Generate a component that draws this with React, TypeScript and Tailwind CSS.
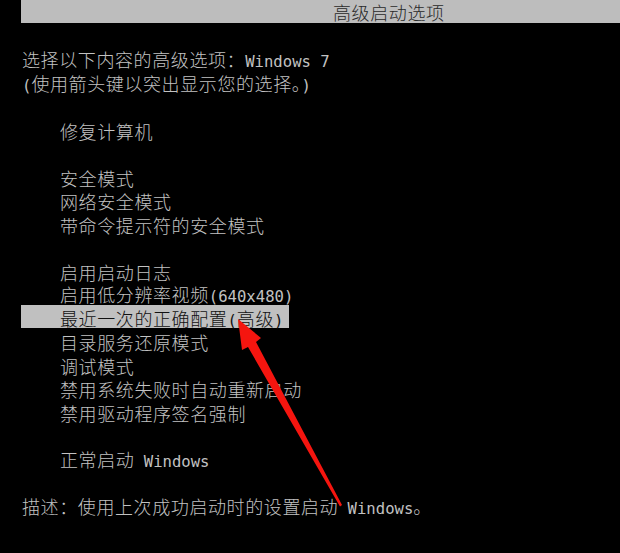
import React from "react";

type Row = { text?: string; indent?: boolean; selected?: boolean };

const rows: Row[] = [
  { text: "选择以下内容的高级选项：Windows 7" },
  { text: "(使用箭头键以突出显示您的选择。)" },
  {},
  { text: "修复计算机", indent: true },
  {},
  { text: "安全模式", indent: true },
  { text: "网络安全模式", indent: true },
  { text: "带命令提示符的安全模式", indent: true },
  {},
  { text: "启用启动日志", indent: true },
  { text: "启用低分辨率视频(640x480)", indent: true },
  { text: "最近一次的正确配置(高级)", indent: true, selected: true },
  { text: "目录服务还原模式", indent: true },
  { text: "调试模式", indent: true },
  { text: "禁用系统失败时自动重新启动", indent: true },
  { text: "禁用驱动程序签名强制", indent: true },
  {},
  { text: "正常启动 Windows", indent: true },
  {},
  { text: "描述：使用上次成功启动时的设置启动 Windows。" },
];

// split into ascii runs (half-width cells) and CJK runs (full-width cells)
function Runs({ text }: { text: string }) {
  const parts = text.match(/[\x00-\x7f]+|[^\x00-\x7f]+/g) ?? [];
  return (
    <span className="leading-none">
      {parts.map((p, i) =>
        /^[\x00-\x7f]/.test(p) ? (
          <span key={i} className="font-['DejaVu_Sans_Mono',monospace] text-[15.6px] whitespace-pre">
            {p}
          </span>
        ) : (
          <span key={i} className="font-['Noto_Sans_CJK_SC',sans-serif] text-[18px] font-light tracking-[0.6px]">
            {p}
          </span>
        )
      )}
    </span>
  );
}

function Arrow() {
  return (
    <svg className="pointer-events-none absolute left-0 top-0" width="620" height="553" viewBox="0 0 620 553">
      <polygon
        points="238,319 261,338 256,342 342,505 340,506.5 248,347 242,350"
        fill="#f5150f"
      />
    </svg>
  );
}

export default function App() {
  return (
    <div className="relative h-[553px] w-[620px] overflow-hidden bg-black text-[#c2c2c2]">
      <div className="ml-[21px] flex h-[23px] items-center bg-[#bdbdbd] pl-[312px] text-[#2a2a2a]">
        <span className="font-['Noto_Sans_CJK_SC',sans-serif] text-[18px] font-light leading-none tracking-[0.6px]">
          高级启动选项
        </span>
      </div>

      <div className="mt-[26px]">
        {rows.map((r, i) =>
          !r.text ? (
            <div key={i} className="h-[23.5px]" />
          ) : r.selected ? (
            <div key={i} className="flex h-[23.5px] items-start">
              <div className="-mt-[3px] ml-[21px] flex h-[23px] items-center bg-[#c0c0c0] pl-[39px] pr-[6px] pt-[6px] text-[#111]">
                <Runs text={r.text} />
              </div>
            </div>
          ) : (
            <div
              key={i}
              className={"flex h-[23.5px] items-center " + (r.indent ? "pl-[60px]" : "pl-[22px]")}
            >
              <Runs text={r.text} />
            </div>
          )
        )}
      </div>

      <Arrow />
    </div>
  );
}
